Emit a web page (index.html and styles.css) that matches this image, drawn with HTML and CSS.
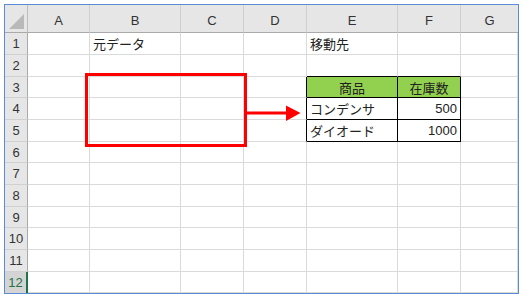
FILE: index.html
```html
<!DOCTYPE html>
<html lang="ja">
<head>
<meta charset="utf-8">
<link rel="stylesheet" href="styles.css">
</head>
<body>
<div class="sheet">
  <div class="grid">
    <div class="corner"><span class="tri"></span></div>
    <div class="ch">A</div><div class="ch">B</div><div class="ch">C</div><div class="ch">D</div><div class="ch">E</div><div class="ch">F</div><div class="ch last">G</div>

    <div class="rh">1</div><div class="c"></div><div class="c">元データ</div><div class="c"></div><div class="c"></div><div class="c">移動先</div><div class="c"></div><div class="c"></div>
    <div class="rh">2</div><div class="c"></div><div class="c"></div><div class="c"></div><div class="c"></div><div class="c bb"></div><div class="c bb"></div><div class="c"></div>
    <div class="rh">3</div><div class="c"></div><div class="c"></div><div class="c"></div><div class="c br"></div><div class="c tb head center">商品</div><div class="c tb head center">在庫数</div><div class="c"></div>
    <div class="rh">4</div><div class="c"></div><div class="c"></div><div class="c"></div><div class="c br"></div><div class="c tb">コンデンサ</div><div class="c tb num">500</div><div class="c"></div>
    <div class="rh">5</div><div class="c"></div><div class="c"></div><div class="c"></div><div class="c br"></div><div class="c tb">ダイオード</div><div class="c tb num">1000</div><div class="c"></div>
    <div class="rh">6</div><div class="c"></div><div class="c"></div><div class="c"></div><div class="c"></div><div class="c"></div><div class="c"></div><div class="c"></div>
    <div class="rh">7</div><div class="c"></div><div class="c"></div><div class="c"></div><div class="c"></div><div class="c"></div><div class="c"></div><div class="c"></div>
    <div class="rh">8</div><div class="c"></div><div class="c"></div><div class="c"></div><div class="c"></div><div class="c"></div><div class="c"></div><div class="c"></div>
    <div class="rh">9</div><div class="c"></div><div class="c"></div><div class="c"></div><div class="c"></div><div class="c"></div><div class="c"></div><div class="c"></div>
    <div class="rh">10</div><div class="c"></div><div class="c"></div><div class="c"></div><div class="c"></div><div class="c"></div><div class="c"></div><div class="c"></div>
    <div class="rh">11</div><div class="c"></div><div class="c"></div><div class="c"></div><div class="c"></div><div class="c"></div><div class="c"></div><div class="c"></div>
    <div class="rh sel">12</div><div class="c"></div><div class="c"></div><div class="c"></div><div class="c"></div><div class="c"></div><div class="c"></div><div class="c"></div>
  </div>
  <svg class="overlay" width="216" height="75" viewBox="0 0 216 75">
    <rect x="1.5" y="1.5" width="159" height="71" fill="none" stroke="#ff0000" stroke-width="3"/>
    <line x1="161" y1="40" x2="203" y2="40" stroke="#ff0000" stroke-width="3"/>
    <polygon points="201,32.5 215.5,40 201,48" fill="#ff0000"/>
  </svg>
</div>
</body>
</html>
```

FILE: styles.css
```css
html, body {
  margin: 0;
  padding: 0;
  background: #ffffff;
}
body {
  padding: 4px;
  font-family: "Noto Sans CJK JP", "Liberation Sans", sans-serif;
}
.sheet {
  position: relative;
  width: 513px;
  border: 1px solid #5b8bd6;
  background: #ffffff;
}
.grid {
  display: grid;
  grid-template-columns: 23px 62px 91px 63px 63px 91px 63px 57px;
  grid-template-rows: 28px 22px 22px 21px 22px 22px 21px 22px 22px 21px 22px 22px 21px;
}
.grid > div {
  box-sizing: border-box;
  display: flex;
  align-items: center;
  font-size: 13px;
  color: #222222;
  white-space: nowrap;
  overflow: hidden;
}
.corner {
  position: relative;
  background: #e6e6e6;
  border-right: 1px solid #bdbdbd;
  border-bottom: 1px solid #aaaaaa;
}
.tri {
  position: absolute;
  right: 3px;
  bottom: 3px;
  width: 0;
  height: 0;
  border-left: 15px solid transparent;
  border-bottom: 15px solid #b9b9b9;
}
.grid > .ch {
  background: #e6e6e6;
  border-right: 1px solid #cfcfcf;
  border-bottom: 1px solid #aaaaaa;
  justify-content: center;
  font-family: "Liberation Sans", "Noto Sans CJK JP", sans-serif;
  font-size: 13px;
  color: #333333;
  padding-top: 4px;
}
.grid > .ch.last { border-right: none; }
.grid > .rh {
  background: #e6e6e6;
  border-right: 1px solid #aaaaaa;
  border-bottom: 1px solid #d0d0d0;
  justify-content: center;
  font-family: "Liberation Sans", "Noto Sans CJK JP", sans-serif;
  font-size: 13px;
  color: #333333;
}
.grid > .rh.sel {
  background: #d4d4d4;
  color: #217346;
  border-right: 2px solid #217346;
  border-bottom: none;
}
.grid > .c {
  border-right: 1px solid #dadada;
  border-bottom: 1px solid #dadada;
  padding: 0 3px;
}
.grid > .c.bb { border-bottom-color: #000000; }
.grid > .c.br { border-right-color: #000000; }
.grid > .c.tb {
  border-right-color: #000000;
  border-bottom-color: #000000;
}
.grid > .c.head { background: #92d050; }
.grid > .center { justify-content: center; }
.grid > .num {
  justify-content: flex-end;
  font-family: "Liberation Sans", sans-serif;
}
.overlay {
  position: absolute;
  left: 80px;
  top: 68px;
}
```
